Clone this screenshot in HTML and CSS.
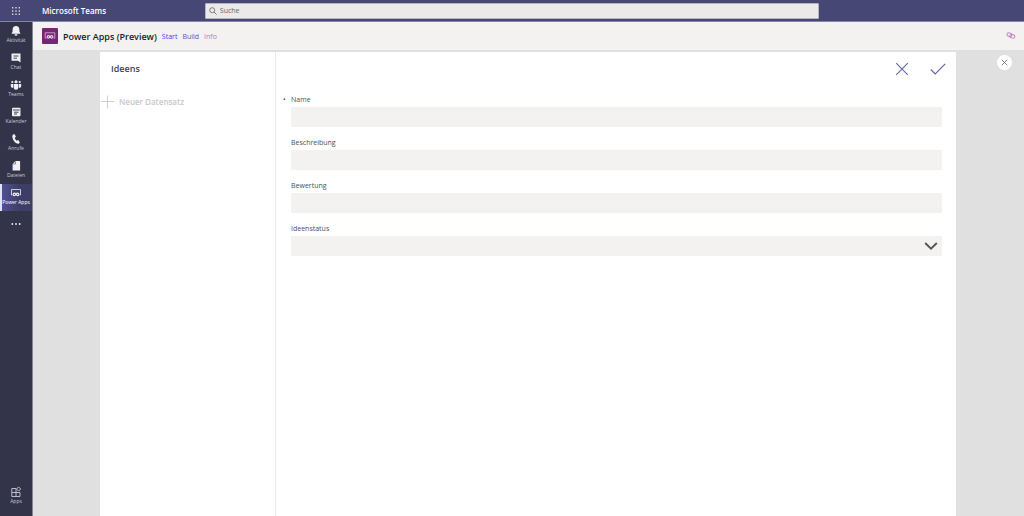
FILE: index.html
```html
<!DOCTYPE html>
<html lang="de">
<head>
<meta charset="utf-8">
<title>Power Apps (Preview) | Microsoft Teams</title>
<link rel="stylesheet" href="styles.css">
</head>
<body>
<header class="topbar">
  <div class="brand">
    <button class="waffle" aria-label="App-Startfeld">
      <svg width="10" height="10" viewBox="0 0 10 10" fill="currentColor"><path d="M1 1h1.400v1.400H1zM4.300 1h1.400v1.400H4.300zM7.600 1H9v1.400H7.600zM1 4.300h1.400v1.400H1zM4.300 4.300h1.400v1.400H4.300zM7.600 4.300H9v1.400H7.600zM1 7.600h1.400V9H1zM4.300 7.600h1.400V9H4.300zM7.600 7.600H9V9H7.600z"/></svg>
    </button>
    <span class="brand-name">Microsoft Teams</span>
  </div>
  <div class="search">
    <svg width="8" height="8" viewBox="0 0 8 8" fill="none" stroke="#666" stroke-width="0.800"><circle cx="3.200" cy="3.200" r="2.500"/><path d="M5 5l2.600 2.600"/></svg>
    <input class="search-input" type="text" placeholder="Suche" aria-label="Suche">
  </div>
</header>
<div class="shell">
  <nav class="rail">
    <button class="rail-item">
      <svg width="12" height="12" viewBox="0 0 12 12" fill="currentColor"><path d="M6 1C3.800 1 2.600 2.600 2.600 4.500v2L1.500 8.700h9L9.400 6.500v-2C9.400 2.600 8.200 1 6 1zM4.500 9.300h3a1.500 1.500 0 0 1-3 0z"/></svg>
      <span>Aktivität</span>
    </button>
    <button class="rail-item">
      <svg width="12" height="12" viewBox="0 0 12 12"><path fill="currentColor" d="M2 1.500h8.500v9L8 8.800H2a.5.5 0 0 1-.5-.5V2a.5.500 0 0 1 .5-.5z"/><path stroke="#33344a" stroke-width=".9" d="M3.500 4h5M3.500 6.200h3.500"/></svg>
      <span>Chat</span>
    </button>
    <button class="rail-item">
      <svg width="12" height="12" viewBox="0 0 12 12" fill="currentColor"><circle cx="6" cy="2.800" r="1.500"/><circle cx="2.300" cy="3" r="1.100"/><circle cx="9.700" cy="3" r="1.100"/><path d="M3.700 5h4.600v3.500a2.300 2.300 0 0 1-4.600 0zM.8 5h2.300v3.800A2 2 0 0 1 .8 7zM8.900 5h2.300v2a2 2 0 0 1-2.300 1.800z"/></svg>
      <span>Teams</span>
    </button>
    <button class="rail-item">
      <svg width="12" height="12" viewBox="0 0 12 12"><rect x="2" y="1.800" width="8.500" height="8.500" rx="1" fill="currentColor"/><path stroke="#33344a" stroke-width=".9" d="M2.800 4h7M4 6.200h4.500M4 8h3"/></svg>
      <span>Kalender</span>
    </button>
    <button class="rail-item">
      <svg width="12" height="12" viewBox="0 0 12 12" fill="currentColor"><path d="M3 1.500l1.700-.3 1.200 2.600L4.700 5c.4 1.200 1.100 2.100 2 2.700l1.500-.6 1.600 2.200-1 1.400C5.500 11.300 2.200 6.500 2.300 3z"/></svg>
      <span>Anrufe</span>
    </button>
    <button class="rail-item">
      <svg width="12" height="12" viewBox="0 0 12 12"><path fill="currentColor" d="M5.500 1H9.500a.6.600 0 0 1 .6.600v9H2.600V4z"/><path fill="none" stroke="#33344a" stroke-width=".5" d="M5.500 1.300V4H2.800"/></svg>
      <span>Dateien</span>
    </button>
    <button class="rail-item is-active">
      <svg width="12" height="12" viewBox="0 0 12 12" fill="none" stroke="currentColor" stroke-width=".8"><path d="M2.400 8H1.500V2.500h9V8H9.600"/><path stroke-width="1.200" d="M6 7.400c-.7-.9-1.100-1.200-1.600-1.200a1.200 1.200 0 0 0 0 2.400C4.900 8.600 5.300 8.300 6 7.400s1.100-1.200 1.600-1.200a1.200 1.200 0 0 1 0 2.400C7.100 8.600 6.700 8.300 6 7.400z"/></svg>
      <span>Power Apps</span>
    </button>
    <button class="rail-item" aria-label="Weitere Apps">
      <svg width="12" height="12" viewBox="0 0 12 12" fill="currentColor"><circle cx="2.300" cy="6" r=".9"/><circle cx="6" cy="6" r=".9"/><circle cx="9.700" cy="6" r=".9"/></svg>
    </button>
    <button class="rail-item rail-bottom">
      <svg width="12" height="12" viewBox="0 0 12 12" fill="none" stroke="currentColor" stroke-width=".9"><path d="M6 2.500H1.800v8H10V6.500H1.800M6 2.500v8"/><path d="M8.600.9l2.100 2.100-2.100 2.100L6.500 3z"/></svg>
      <span>Apps</span>
    </button>
  </nav>
  <div class="workspace">
    <div class="appbar">
      <span class="app-logo">
        <svg width="12" height="12" viewBox="0 0 12 12" fill="none" stroke="currentColor" stroke-width=".7"><path d="M2.400 8.200H1.200V2.800h9.600v5.400H9.600"/><path stroke-width="1.200" d="M6 6.900c-.7-.9-1.100-1.200-1.600-1.200a1.200 1.200 0 0 0 0 2.400C4.900 8.100 5.300 7.800 6 6.900s1.100-1.200 1.600-1.200a1.200 1.200 0 0 1 0 2.400C7.100 8.100 6.700 7.800 6 6.900z"/></svg>
      </span>
      <h1 class="app-title">Power Apps (Preview)</h1>
      <div class="tabs">
        <a class="tab is-current" href="#start">Start</a>
        <a class="tab" href="#build">Build</a>
        <a class="tab is-light" href="#info">Info</a>
      </div>
      <button class="link-button" aria-label="Link kopieren">
        <svg width="10" height="8" viewBox="0 0 10 8" fill="none" stroke="#c583c3" stroke-width="1"><rect x="1" y="1" width="5" height="3.400" rx="1.700" transform="rotate(12 3.500 2.700)"/><rect x="3.800" y="2.600" width="5" height="3.400" rx="1.700" transform="rotate(12 6.300 4.300)"/></svg>
      </button>
    </div>
    <main class="stage">
      <section class="dialog">
        <aside class="records">
          <h2 class="records-title">Ideens</h2>
          <button class="new-record" disabled>
            <svg width="15" height="14" viewBox="0 0 15 14" stroke="#cfcfcf" fill="none"><path d="M1 6.500h13M7.500 .5v13"/></svg>
            <span>Neuer Datensatz</span>
          </button>
        </aside>
        <form class="form">
          <div class="actions">
            <button type="button" class="icon-button" aria-label="Abbrechen"><svg width="14" height="14" viewBox="0 0 14 14" fill="none" stroke="#6264a7" stroke-width="1.100"><path d="M1.200 1.200l11.600 11.600M12.800 1.200L1.200 12.800"/></svg></button>
            <button type="button" class="icon-button" aria-label="Speichern"><svg width="16" height="14" viewBox="0 0 16 14" fill="none" stroke="#6264a7" stroke-width="1.100"><path d="M.8 7.500L5.200 12 15.200 1.800"/></svg></button>
          </div>
          <div class="fields">
            <div class="field"><label class="label required" for="name">Name</label><input class="control" id="name" type="text" required></div>
            <div class="field"><label class="label" for="beschreibung">Beschreibung</label><input class="control" id="beschreibung" type="text"></div>
            <div class="field"><label class="label" for="bewertung">Bewertung</label><input class="control" id="bewertung" type="text"></div>
            <div class="field">
              <label class="label" for="status">Ideenstatus</label>
              <div class="select-wrap">
                <select class="control" id="status"><option value=""></option></select>
                <svg class="chevron" width="14" height="8" viewBox="0 0 14 8" fill="none" stroke="#555" stroke-width="1.900"><path d="M1.200 1L7 6.600 12.800 1"/></svg>
              </div>
            </div>
          </div>
        </form>
      </section>
      <button class="close" aria-label="Schließen"><svg width="7" height="7" viewBox="0 0 7 7" stroke="#777" stroke-width=".9"><path d="M.8 .8l5.400 5.400M6.200 .8L.8 6.200"/></svg></button>
    </main>
  </div>
</div>
</body>
</html>
```
FILE: styles.css
```css
* { box-sizing: border-box; }

body {
  margin: 0;
  min-height: 100vh;
  display: flex;
  flex-direction: column;
  font-family: "Open Sans", "Noto Sans", sans-serif;
  font-size: 7px;
  color: #505050;
}

button, input, select { font: inherit; color: inherit; border: 0; padding: 0; background: none; }
svg { display: block; flex: none; }
h1, h2 { margin: 0; }

.topbar {
  display: grid;
  grid-template-columns: 1fr 60% 1fr;
  align-items: center;
  height: 22px;
  background: #464775;
  border-bottom: 1px solid #8485a3;
  color: #fff;
}
.brand { display: flex; align-items: center; }
.waffle { display: flex; justify-content: center; width: 32px; margin-right: 10px; color: #d0d0e0; }
.brand-name { font-size: 8px; font-weight: 600; }
.search {
  display: flex;
  align-items: center;
  gap: 3px;
  height: 16px;
  padding: 0 3px;
  background: #ebeae8;
  border: 1px solid #b4b3c4;
  border-radius: 1px;
  color: #555;
}
.search-input { flex: 1; min-width: 0; outline: 0; }
.search-input::placeholder { color: #666; opacity: 1; }

.shell { flex: 1; display: flex; }

.rail { display: flex; flex-direction: column; width: 32px; background: #33344a; color: #f0f0f5; }
.rail-item {
  display: flex;
  flex-direction: column;
  align-items: center;
  justify-content: center;
  height: 27px;
  padding-bottom: 2px;
  font-size: 5px;
  line-height: 7px;
  white-space: nowrap;
}
.rail-item span { color: #c8c8d4; }
.rail-item.is-active { background: linear-gradient(90deg, #51529a, #3d3e66 60%); box-shadow: inset 2px 0 #e2e2f6; }
.rail-item.is-active span { color: #fff; }
.rail-bottom { margin-top: auto; margin-bottom: 6px; color: #c8c8d4; }

.workspace { flex: 1; min-width: 0; display: flex; flex-direction: column; border-left: 1px solid #85859a; }
.appbar {
  display: flex;
  align-items: center;
  height: 28px;
  padding: 0 8px 0 9px;
  background: #f3f2f1;
}
.app-logo { display: flex; align-items: center; justify-content: center; width: 16px; height: 16px; border-radius: 1px; background: #742774; color: #e8cfe8; }
.app-title { margin-left: 5px; font-size: 9px; font-weight: 600; color: #222; }
.tabs { display: flex; gap: 5px; margin-left: 5px; }
.tab { color: #7b4ba0; text-decoration: none; }
.tab.is-current { color: #4040ff; }
.tab.is-light { color: #a284b8; }
.link-button { margin-left: auto; }

.stage {
  position: relative;
  flex: 1;
  display: flex;
  padding: 2px 68px 0 67px;
  background: #e0e0e0;
}
.dialog { flex: 1; display: flex; background: #fff; }
.records { width: 176px; border-right: 1px solid #ebebeb; }
.records-title { padding: 10px 11px 0; font-size: 9px; line-height: 14px; font-weight: 600; color: #444; }
.new-record { display: flex; align-items: center; gap: 4px; margin-top: 19px; font-size: 8px; line-height: 14px; font-weight: 600; color: #c8c8c8; }

.form { flex: 1; padding: 0 14px 0 15px; }
.actions { display: flex; justify-content: flex-end; align-items: center; gap: 21px; height: 34px; padding-right: 10px; margin-right: -14px; }
.icon-button { display: block; }
.fields { display: flex; flex-direction: column; gap: 8px; padding-top: 6px; }
.field { display: flex; flex-direction: column; }
.label { height: 15px; line-height: 15px; }
.required { margin-left: -8px; }
.required::before { content: "•"; display: inline-block; width: 8px; }
.control { width: 100%; height: 20px; display: block; background: #f3f2f1; border-radius: 1px; }
.select-wrap { position: relative; }
select.control { appearance: none; }
.chevron { position: absolute; right: 4px; top: 6px; pointer-events: none; }

.close {
  position: absolute;
  top: 5px;
  right: 12px;
  display: flex;
  align-items: center;
  justify-content: center;
  width: 15px;
  height: 15px;
  border-radius: 50%;
  background: #fff;
}
```
